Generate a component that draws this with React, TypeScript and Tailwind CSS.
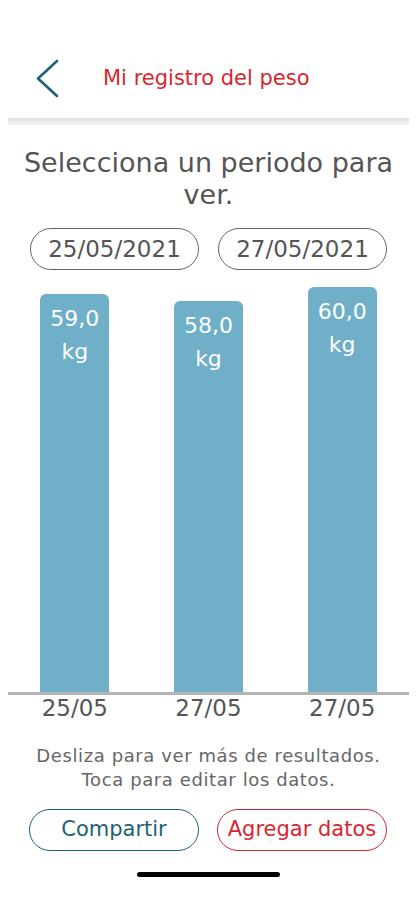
const entries = [
  { id: 1, value: 59.0, label: '25/05' },
  { id: 2, value: 58.0, label: '27/05' },
  { id: 3, value: 60.0, label: '27/05' },
];

// 7px per kg around a 59 kg baseline of 398px
const barHeight = (v: number) => 398 + (v - 59) * 7;

export default function App() {
  return (
    <div className="w-[417px] h-[900px] bg-white flex flex-col font-['DejaVu_Sans',sans-serif] text-[#555]">
      {/* header */}
      <div className="h-[118px] flex items-center pl-[35px] pt-[40px]">
        <svg width="24" height="40" viewBox="0 0 24 40" fill="none">
          <polyline
            points="22,2 3,19.5 22,37"
            stroke="#1b6372"
            strokeWidth="2.6"
            strokeLinecap="round"
            strokeLinejoin="round"
          />
        </svg>
        <span className="ml-[44px] text-[21px] text-[#d8262e]">Mi registro del peso</span>
      </div>
      <div className="mx-2 h-[7px] bg-gradient-to-b from-[#e2e2e2] to-[#f2f2f2]" />

      <h1 className="mt-[22px] text-center text-[27px] leading-[32px] px-4">
        Selecciona un periodo para ver.
      </h1>

      <div className="mt-[17px] flex gap-[19px] px-[30px]">
        <button className="w-[169px] h-[42px] rounded-full border border-[#666] text-[23px] text-[#555]">
          25/05/2021
        </button>
        <button className="w-[169px] h-[42px] rounded-full border border-[#666] text-[23px] text-[#555]">
          27/05/2021
        </button>
      </div>

      {/* chart */}
      <div className="mx-2 mt-[17px] h-[405px] grid grid-cols-3 items-end">
        {entries.map((e) => (
          <div key={e.id} className="flex justify-center">
            <div
              className="w-[69px] rounded-t-[6px] bg-[#6fafc8] text-white text-center text-[22px] leading-[33px] pt-[8px]"
              style={{ height: barHeight(e.value) }}
            >
              <div>{e.value.toFixed(1).replace('.', ',')}</div>
              <div>kg</div>
            </div>
          </div>
        ))}
      </div>
      <div className="mx-2 h-[3px] bg-[#b4b4b4]" />
      <div className="mx-2 grid grid-cols-3 text-center text-[23px] leading-[26px]">
        {entries.map((e) => (
          <span key={e.id}>{e.label}</span>
        ))}
      </div>

      <p className="mt-[23px] text-center text-[18px] leading-[24px] tracking-[0.6px] text-[#666]">
        Desliza para ver más de resultados.
        <br />
        Toca para editar los datos.
      </p>

      <div className="mt-[17px] flex gap-[18px] px-[29px]">
        <button className="w-[170px] h-[42px] rounded-full border border-[#1b6372] text-[21px] text-[#1b6372]">
          Compartir
        </button>
        <button className="w-[170px] h-[42px] rounded-full border border-[#d8262e] text-[21px] text-[#d8262e]">
          Agregar datos
        </button>
      </div>

      <div className="mt-[21px] mx-auto w-[143px] h-[5px] rounded-full bg-black" />
    </div>
  );
}
